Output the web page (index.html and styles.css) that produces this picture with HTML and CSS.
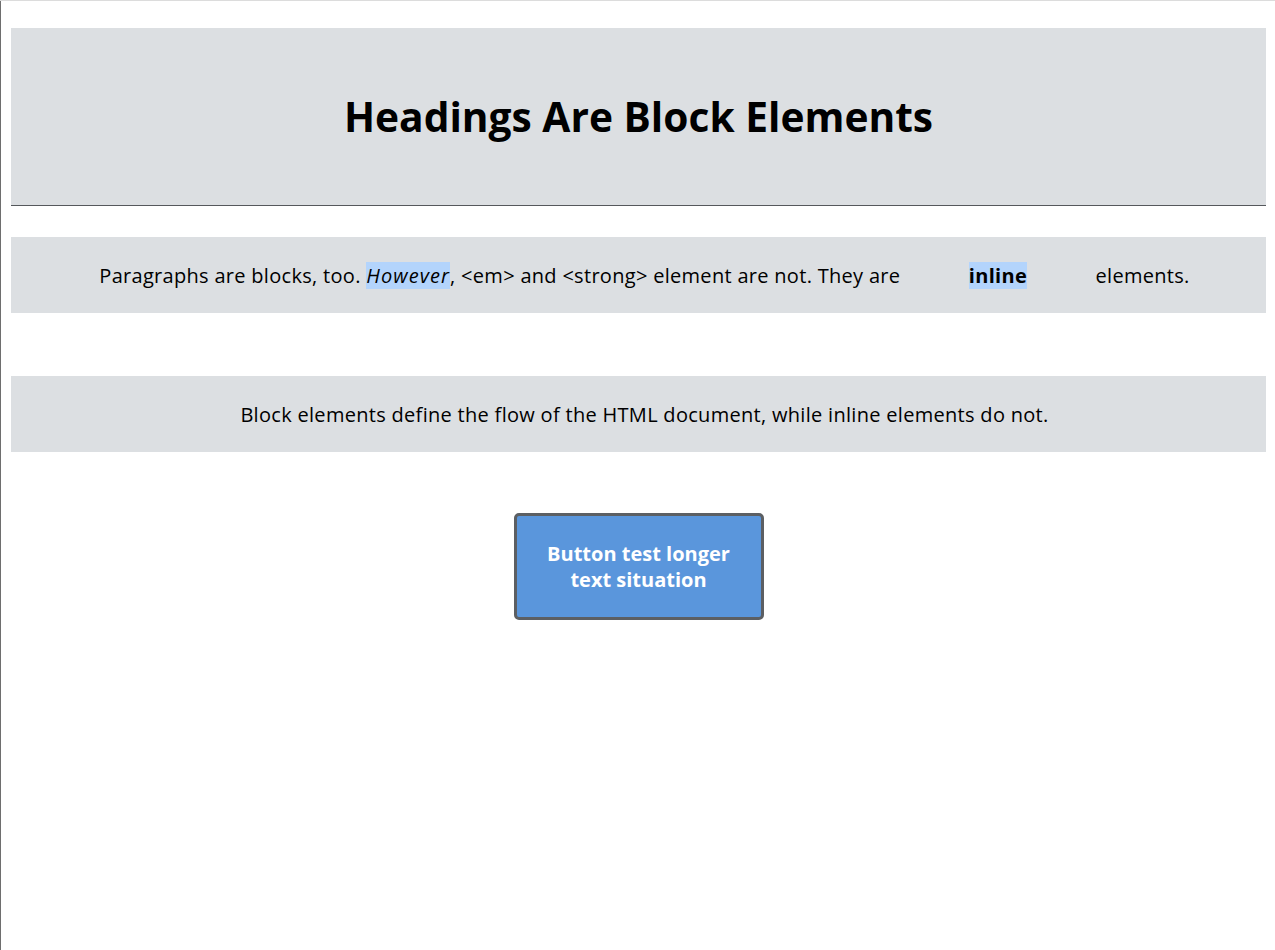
FILE: index.html
```html
<!DOCTYPE html>
<html lang="en">
<head>
<meta charset="utf-8">
<title>Block and Inline</title>
<link rel="stylesheet" href="styles.css">
</head>
<body>
<div class="page">
  <header class="banner">
    <h1 class="banner-title">Headings Are Block Elements</h1>
  </header>
  <p class="block">Paragraphs are blocks, too. <em class="mark">However</em>, &lt;em&gt; and &lt;strong&gt; element are not. They are <strong class="mark spaced">inline</strong> elements.</p>
  <p class="block block-last">Block elements define the flow of the HTML document, while inline elements do not.</p>
  <div class="actions">
    <button class="btn" type="button">Button test longer text situation</button>
  </div>
</div>
</body>
</html>
```

FILE: styles.css
```css
html {
  margin: 0;
  border-top: 1px solid #dcdcdc;
  background: #fff;
}
body {
  margin: 0;
  min-height: 949px;
  border-left: 1px solid #6e6e6e;
  font-family: "Open Sans", "Noto Sans", sans-serif;
  color: #000;
}
.page {
  padding: 27px 9px 0 10px;
  display: flex;
  flex-direction: column;
}
.banner {
  background: #dcdfe2;
  border-bottom: 1px solid #55585c;
  height: 177px;
  display: flex;
  align-items: center;
  justify-content: center;
  margin-bottom: 31px;
}
.banner-title {
  margin: 0;
  font-size: 40.7px;
  font-weight: 700;
  line-height: 1.2;
}
.block {
  margin: 0 0 63px;
  background: #dcdfe2;
  padding: 25px 10px 24px 22px;
  text-align: center;
  font-size: 20px;
  line-height: 27px;
  letter-spacing: 0.3px;
}
.block-last {
  margin-bottom: 61px;
}
.mark {
  background: #b3d4fc;
}
em.mark {
  letter-spacing: 1.1px;
}
.spaced {
  margin: 0 63px;
}
.actions {
  display: flex;
  justify-content: center;
}
.btn {
  width: 250px;
  box-sizing: border-box;
  padding: 25px 20px 24px;
  border: 3px solid #5c5f63;
  border-radius: 5px;
  background: #5a96dc;
  color: #fff;
  font-family: inherit;
  font-size: 20px;
  font-weight: 700;
  line-height: 26px;
  text-align: center;
}
```
